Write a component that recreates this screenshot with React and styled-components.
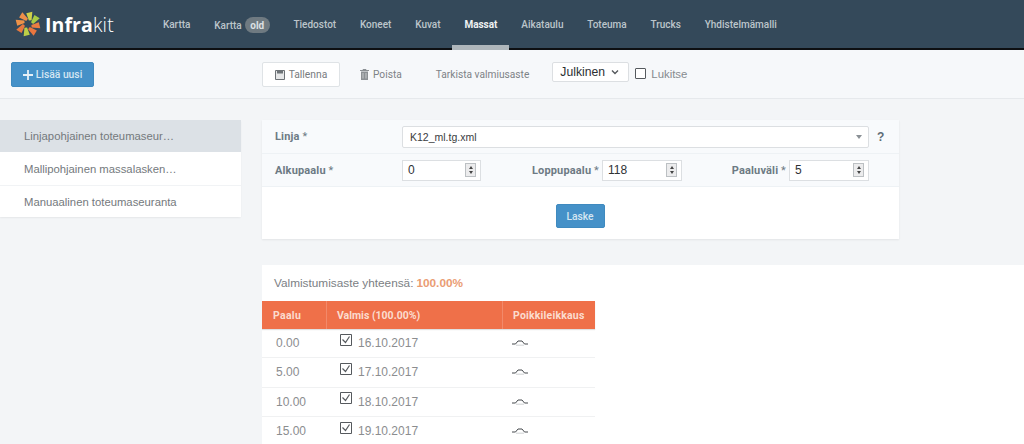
import React from "react";
import styled, { createGlobalStyle } from "styled-components";

const Global = createGlobalStyle`
  html, body { margin: 0; padding: 0; background: #f3f5f7; overflow: hidden; }
  body { font-family: "Liberation Sans", Arial, sans-serif; color: #777c80; }
  * { box-sizing: border-box; }
`;

const Page = styled.div`width: 1024px; height: 444px; overflow: hidden;`;

const TopBar = styled.header`
  height: 50px; display: flex; background: #34495a; border-bottom: 2px solid #0d0f12;
`;
const Logo = styled.div`
  width: 151px; padding: 11px 0 0 15px; display: flex; align-items: flex-start; gap: 4px;
`;
const LogoWord = styled.div`
  font-family: "Open Sans", sans-serif; font-size: 19.5px; line-height: 28px; color: #fff; font-weight: 700; letter-spacing: 0.1px;
  span { font-weight: 300; letter-spacing: 0.2px; }
`;
const Nav = styled.nav`display: flex;`;
const NavItem = styled.a`
  position: relative; padding: 17px 11.9px 0; font-family: Roboto, sans-serif; font-size: 10px; line-height: 16px;
  font-weight: ${p => (p.$active ? 700 : 500)}; color: ${p => (p.$active ? "#eef1f3" : "#bcc5cb")};
  white-space: nowrap;
  &::after {
    content: ""; display: ${p => (p.$active ? "block" : "none")}; position: absolute; left: 0; right: 0; bottom: -2px; height: 5px; background: #aeb6bb;
  }
`;
const Pill = styled.span`
  display: inline-block; margin-left: 3px; padding: 0 5.5px; height: 16px; border-radius: 8px; background: #6f7a81; color: #dde1e4;
  font-weight: 700; line-height: 17px;
`;

const Toolbar = styled.div`
  height: 49px; background: #f6f8fa; border-bottom: 1px solid #e6e9ec; display: flex; align-items: flex-start; padding: 12px 0 0 11px;
`;
const PrimaryButton = styled.button`
  height: ${p => p.$h}px; width: ${p => p.$w}px; border: 1px solid #3f8abf; border-radius: 2px; background: #4591c8; color: #d5e6f2; padding: 0;
  display: flex; align-items: center; justify-content: center; gap: 3px; font: 500 10.3px Roboto, sans-serif;
`;
const ToolGroup = styled.div`display: flex; align-items: flex-start; margin-left: 168px;`;
const SaveButton = styled.button`
  height: 25px; width: 78px; border: 1px solid #dfe3e6; border-radius: 2px; background: #fff; color: #777c80; padding: 0;
  display: flex; align-items: center; justify-content: center; gap: 4px; font: 400 10.3px Roboto, sans-serif;
`;
const ToolLink = styled.span`
  display: flex; align-items: center; gap: 4px; height: 25px; margin-left: ${p => p.$ml}px; font: 400 10.2px Roboto, sans-serif; color: #7d8286; white-space: nowrap;
`;
const SelectBox = styled.div`
  margin-left: 23px; width: 77px; height: 20px; background: #fff; border: 1px solid #dcdfe2; border-radius: 2px;
  display: flex; align-items: center; justify-content: space-between; padding: 0 9px 0 7px; font-size: 12.2px; color: #2c2f32;
`;
const CheckBox = styled.span`
  width: 11px; height: 11px; margin: 6px 5px 0 6px; border: 1px solid #555a5e; border-radius: 1px; background: #fff;
`;
const CheckLabel = styled.span`font-size: 11.4px; line-height: 24px; color: #868b8f;`;

const Body = styled.div`display: flex; align-items: flex-start; padding-top: 21px;`;
const Side = styled.aside`
  width: 241px; background: #fff; border-radius: 0 2px 2px 0; box-shadow: 0 1px 2px rgba(0,0,0,.06);
`;
const SideItem = styled.div`
  height: ${p => p.$h}px; padding-left: 24px; display: flex; align-items: center; font-size: 11.3px; color: #74797d;
  background: ${p => (p.$active ? "#dce1e6" : "#fff")}; border-top: ${p => (p.$line ? "1px solid #f1f3f5" : "none")};
`;
const Main = styled.main`flex: 1; margin-left: 21px; min-width: 0;`;
const FormCard = styled.section`
  width: 637px; background: #fff; box-shadow: 0 1px 2px rgba(0,0,0,.07);
`;
const FormRow = styled.div`
  height: ${p => p.$h}px; background: #f8fafc; border-bottom: 1px solid #eef2f5; display: flex; align-items: center; padding-left: 13px;
`;
const Label = styled.label`
  flex: none; width: ${p => p.$w}px; text-align: ${p => p.$right ? "right" : "left"}; padding-right: ${p => p.$right ? 3 : 0}px;
  font: 700 11px Roboto, sans-serif; color: #6d7a84; white-space: nowrap; letter-spacing: 0.15px;
  b { font-weight: 400; }
`;
const Combo = styled.div`
  flex: none; width: 467px; height: 22px; background: #fff; border: 1px solid #dcdfe2; border-radius: 2px; display: flex; align-items: center;
  justify-content: space-between; padding: 1px 6px 0 7px; font-size: 10.5px; color: #3a3d40;
`;
const Caret = styled.span`
  width: 0; height: 0; border-left: 3.5px solid transparent; border-right: 3.5px solid transparent; border-top: 4px solid #8a9095;
`;
const Help = styled.span`margin-left: 8px; font: 700 12px "Liberation Sans", sans-serif; color: #5f6c76;`;
const NumberField = styled.div`
  flex: none; width: ${p => p.$w}px; height: 21px; background: #fff; border: 1px solid #dcdfe2; display: flex; align-items: center;
  justify-content: space-between; padding: 0 4px 0 5px; font-size: 12px; color: #2f3235;
`;
const Spinner = styled.span`
  width: 11px; height: 14px; border: 1px solid #bcc0c3; background: #ececed; display: flex; flex-direction: column; align-items: center; justify-content: space-around; padding: 1px 0;
  i { width: 0; height: 0; border-left: 2.5px solid transparent; border-right: 2.5px solid transparent; }
  i:first-child { border-bottom: 3px solid #444; }
  i:last-child { border-top: 3px solid #444; }
`;
const ActionRow = styled.div`height: 52px; display: flex; align-items: flex-start; justify-content: center; padding-top: 17px; padding-right: 1px;`;

const ResultCard = styled.section`
  margin-top: 26px; height: 179px; background: #fff; overflow: hidden;
`;
const Summary = styled.div`
  height: 36px; padding-left: 12px; display: flex; align-items: center; gap: 3px; font-size: 11.8px; color: #7b8084;
  strong { color: #ea9c73; }
`;
const Table = styled.div`width: 333px;`;
const HeadRow = styled.div`
  height: 28px; background: #ef7049; display: grid; grid-template-columns: 64px 176px 93px; align-items: center;
  font: 700 10.5px Roboto, sans-serif; color: #fbdccf; box-shadow: 0 1px 1px rgba(0,0,0,.12);
`;
const HeadCell = styled.div`
  height: 100%; display: flex; align-items: center; padding-left: ${p => p.$pl}px;
  border-left: ${p => (p.$line ? "1px solid #f2896a" : "none")}; white-space: nowrap; letter-spacing: ${p => p.$ls}px;
`;
const Row = styled.div`
  height: 29.3px; display: grid; grid-template-columns: 64px 176px 93px; align-items: center; border-bottom: 1px solid #f0f1f2; font-size: 12px; color: #8b8d8f;
  &:first-of-type { margin-top: 1px; }
`;
const Cell = styled.div`padding-left: ${p => p.$pl}px; display: flex; align-items: center; gap: 6px;`;

const petals = ["#ef8f4a", "#cfd04a", "#a9cb45", "#ea7c42", "#e9763f", "#bccf47", "#e8793f", "#ee9248"];
const LogoMark = () => (
  <svg width="26" height="26" viewBox="0 0 26 26">
    {petals.map((c, i) => (
      <path key={i} d="M13 9.500L8.500 3 14 0l1.500 8.500z" fill={c} transform={`rotate(${i * 45 - 30} 13 13)`} />
    ))}
  </svg>
);
const Plus = () => (
  <svg width="10" height="10" viewBox="0 0 10 10"><path d="M5 0v10M0 5h10" stroke="#e6f0f7" strokeWidth="1.8" /></svg>
);
const SaveIcon = () => (
  <svg width="10" height="10" viewBox="0 0 10 10">
    <path d="M.5.5h9v9h-9z" fill="#e6e7e8" stroke="#6d7276" />
    <path d="M2 .5h6v3H2z" fill="#6d7276" />
  </svg>
);
const TrashIcon = () => (
  <svg width="9" height="11" viewBox="0 0 9 11">
    <path d="M0 1.500h9M3 1.500V.5h3v1" stroke="#8b9094" fill="none" />
    <path d="M1 2.500h7V11H1z" fill="#8b9094" />
    <path d="M3 4v5.500M6 4v5.500" stroke="#d6d9db" strokeWidth=".8" />
  </svg>
);
const Chevron = () => (
  <svg width="8" height="6" viewBox="0 0 8 6"><path d="M1 1.500l3 3 3-3" fill="none" stroke="#55595d" strokeWidth="1.400" /></svg>
);
const TickBox = () => (
  <svg width="12" height="12" viewBox="0 0 12 12" style={{ marginTop: -7 }}>
    <path d="M.5.5h11v11H.5z" fill="#fff" stroke="#55595d" />
    <path d="M2.500 5.500l3 3 4-6" fill="none" stroke="#55595d" strokeWidth="1.200" />
  </svg>
);
const Section = () => (
  <svg width="16" height="7" viewBox="0 0 16 7" style={{ marginTop: -1 }}>
    <path d="M0 5h3.500L6 2h4l2.500 3H16" fill="none" stroke="#45494d" strokeWidth="1" />
    <path d="M4 6.200h8" stroke="#c4c7c9" strokeWidth=".8" />
  </svg>
);
const Number = ({ w, value }) => (
  <NumberField $w={w}>{value}<Spinner><i /><i /></Spinner></NumberField>
);

const navItems = ["Tiedostot", "Koneet", "Kuvat", "Massat", "Aikataulu", "Toteuma", "Trucks", "Yhdistelmämalli"];
const rows = [["0.00", "16.10.2017"], ["5.00", "17.10.2017"], ["10.00", "18.10.2017"], ["15.00", "19.10.2017"]];

export default function App() {
  return (
    <Page>
      <Global />
      <TopBar>
        <Logo>
          <LogoMark />
          <LogoWord>Infra<span>kit</span></LogoWord>
        </Logo>
        <Nav>
          <NavItem>Kartta</NavItem>
          <NavItem>Kartta<Pill>old</Pill></NavItem>
          {navItems.map(n => <NavItem key={n} $active={n === "Massat"}>{n}</NavItem>)}
        </Nav>
      </TopBar>
      <Toolbar>
        <PrimaryButton $w={83} $h={25}><Plus />Lisää uusi</PrimaryButton>
        <ToolGroup>
          <SaveButton><SaveIcon />Tallenna</SaveButton>
          <ToolLink $ml={20}><TrashIcon />Poista</ToolLink>
          <ToolLink $ml={34}>Tarkista valmiusaste</ToolLink>
          <SelectBox>Julkinen<Chevron /></SelectBox>
          <CheckBox />
          <CheckLabel>Lukitse</CheckLabel>
        </ToolGroup>
      </Toolbar>
      <Body>
        <Side>
          <SideItem $h={32} $active>Linjapohjainen toteumaseur…</SideItem>
          <SideItem $h={33}>Mallipohjainen massalasken…</SideItem>
          <SideItem $h={32} $line>Manuaalinen toteumaseuranta</SideItem>
        </Side>
        <Main>
          <FormCard>
            <FormRow $h={34}>
              <Label $w={127}>Linja <b>*</b></Label>
              <Combo>K12_ml.tg.xml<Caret /></Combo>
              <Help>?</Help>
            </FormRow>
            <FormRow $h={33}>
              <Label $w={127}>Alkupaalu <b>*</b></Label>
              <Number w={79} value="0" />
              <Label $w={121} $right>Loppupaalu <b>*</b></Label>
              <Number w={80} value="118" />
              <Label $w={107} $right>Paaluväli <b>*</b></Label>
              <Number w={80} value="5" />
            </FormRow>
            <ActionRow><PrimaryButton $w={49} $h={24}>Laske</PrimaryButton></ActionRow>
          </FormCard>
          <ResultCard>
            <Summary>Valmistumisaste yhteensä: <strong>100.00%</strong></Summary>
            <Table>
              <HeadRow>
                <HeadCell $pl={11} $ls={0.3}>Paalu</HeadCell>
                <HeadCell $pl={10} $ls={0} $line>Valmis (100.00%)</HeadCell>
                <HeadCell $pl={10} $ls={0.2} $line>Poikkileikkaus</HeadCell>
              </HeadRow>
              {rows.map(([a, b]) => (
                <Row key={a}>
                  <Cell $pl={14}>{a}</Cell>
                  <Cell $pl={14}><TickBox />{b}</Cell>
                  <Cell $pl={10}><Section /></Cell>
                </Row>
              ))}
            </Table>
          </ResultCard>
        </Main>
      </Body>
    </Page>
  );
}
